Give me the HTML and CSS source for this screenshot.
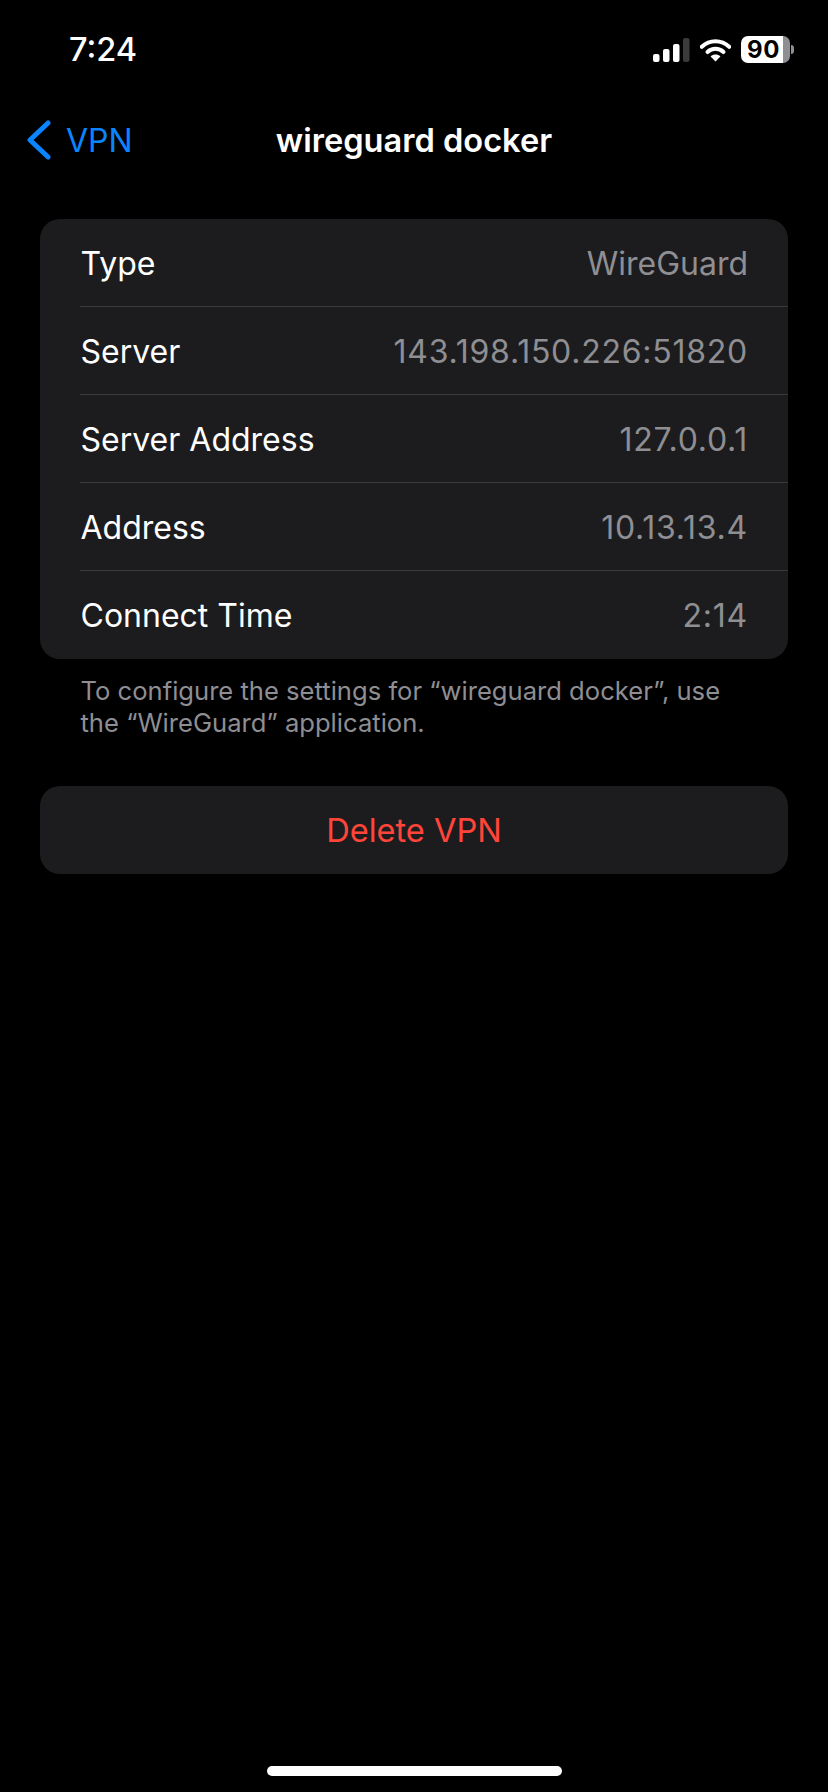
FILE: index.html
```html
<!DOCTYPE html>
<html>
<head>
    <title>wireguard docker</title>
    <link rel="stylesheet" href="styles.css">
</head>
<body>
    <div class="status-bar">
        <span class="time">7:24</span>
        <div class="status-icons">
            <svg class="signal" width="37" height="24" viewBox="0 0 37 24">
                <rect x="0" y="16" width="6.5" height="8" rx="2" fill="#fff"/>
                <rect x="10" y="11" width="6.5" height="13" rx="2" fill="#fff"/>
                <rect x="20" y="6" width="6.5" height="18" rx="2" fill="#fff"/>
                <rect x="30" y="0" width="6.5" height="24" rx="2" fill="#3a3a3c"/>
            </svg>
            <svg class="wifi" width="31" height="24" viewBox="0 0 34 26">
                <path d="M2 9.5C10.5 1.5 23.5 1.5 32 9.5" fill="none" stroke="#fff" stroke-width="4.4" stroke-linecap="round"/>
                <path d="M8.2 15.2C13.2 10.6 20.8 10.6 25.8 15.2" fill="none" stroke="#fff" stroke-width="4.4" stroke-linecap="round"/>
                <path d="M11.6 20C14.6 17.2 19.4 17.2 22.4 20L17 25.5Z" fill="#fff"/>
            </svg>
            <div class="battery">
                <div class="battery-body"><span class="battery-level">90</span></div>
                <div class="battery-cap"></div>
            </div>
        </div>
    </div>

    <div class="nav-bar">
        <a class="back" href="#">
            <svg width="26" height="40" viewBox="0 0 26 40">
                <path d="M22 3L4 20L22 37" fill="none" stroke="#0a84ff" stroke-width="5" stroke-linecap="round" stroke-linejoin="round"/>
            </svg>
            <span>VPN</span>
        </a>
        <h1 class="nav-title">wireguard docker</h1>
    </div>

    <div class="content">
        <ul class="card">
            <li class="row"><span>Type</span><span class="value">WireGuard</span></li>
            <li class="row"><span>Server</span><span class="value num">143.198.150.226:51820</span></li>
            <li class="row"><span>Server Address</span><span class="value num">127.0.0.1</span></li>
            <li class="row"><span>Address</span><span class="value num">10.13.13.4</span></li>
            <li class="row"><span>Connect Time</span><span class="value num">2:14</span></li>
        </ul>
        <p class="footnote">To configure the settings for “wireguard docker”, use<br>the “WireGuard” application.</p>
        <button class="delete-btn">Delete VPN</button>
    </div>

    <div class="home-indicator"></div>
</body>
</html>
```

FILE: styles.css
```css
body {
    font-family: Inter, "Liberation Sans", sans-serif;
    margin: 0;
    padding: 0;
    background-color: #000000;
    color: #ffffff;
    width: 828px;
    height: 1792px;
    position: relative;
    overflow: hidden;
}

.status-bar {
    height: 100px;
    box-sizing: border-box;
    padding: 30px 34px 0 69px;
    display: flex;
    justify-content: space-between;
    align-items: flex-start;
}

.time {
    font-size: 32.5px;
    line-height: 40px;
    font-weight: 500;
}

.status-icons {
    display: flex;
    align-items: center;
    gap: 10px;
    padding-top: 6px;
}

.battery {
    display: flex;
    align-items: center;
    gap: 1px;
}

.battery-body {
    width: 49px;
    height: 27px;
    border-radius: 7px;
    background: linear-gradient(to right, #ffffff 86%, #8e8e93 86%);
    display: flex;
    align-items: center;
    justify-content: center;
    padding-right: 4px;
    box-sizing: border-box;
}

.battery-level {
    color: #000000;
    font-size: 24px;
    font-weight: 700;
    line-height: 27px;
    letter-spacing: 0.5px;
}

.battery-cap {
    width: 3px;
    height: 9px;
    border-radius: 0 3px 3px 0;
    background-color: #8e8e93;
}

.nav-bar {
    height: 80px;
    padding-left: 26px;
    display: flex;
    align-items: center;
    position: relative;
}

.back {
    display: flex;
    align-items: center;
    gap: 14px;
    color: #0a84ff;
    font-size: 32px;
    text-decoration: none;
}

.nav-title {
    position: absolute;
    left: 0;
    right: 0;
    margin: 0;
    text-align: center;
    font-size: 32.6px;
    font-weight: 600;
}

.content {
    padding: 39px 40px 0;
}

.card {
    list-style-type: none;
    margin: 0;
    padding: 0;
    background-color: #1c1c1e;
    border-radius: 20px;
    overflow: hidden;
}

.row {
    height: 88px;
    box-sizing: border-box;
    margin-left: 40px;
    padding: 1px 40px 0 0.5px;
    display: flex;
    justify-content: space-between;
    align-items: center;
    font-size: 32px;
    border-bottom: 1px solid #3a3a3c;
}

.row:last-child {
    border-bottom: none;
}

.value {
    color: #8e8e93;
}

.num {
    letter-spacing: 0.75px;
}

.footnote {
    margin: 16px 0 0;
    padding: 0 40.5px;
    font-size: 25.6px;
    line-height: 32px;
    color: #8e8e93;
}

.delete-btn {
    display: block;
    width: 100%;
    height: 88px;
    margin-top: 47px;
    background-color: #1c1c1e;
    border: none;
    border-radius: 20px;
    color: #ff453a;
    font-family: inherit;
    font-size: 32.6px;
}

.home-indicator {
    position: absolute;
    left: 267px;
    bottom: 16px;
    width: 295px;
    height: 10px;
    border-radius: 5px;
    background-color: #ffffff;
}
```
